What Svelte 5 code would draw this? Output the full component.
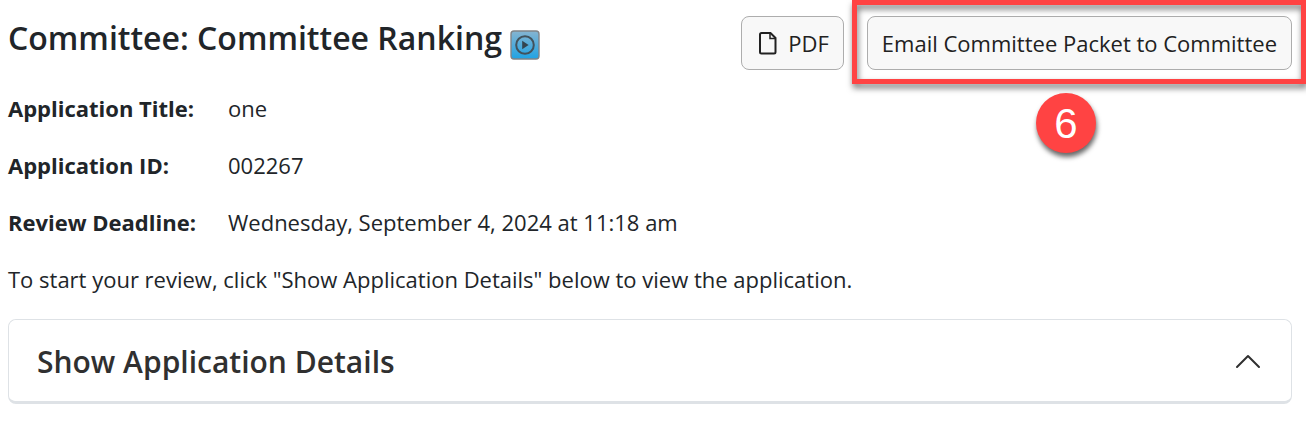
<script lang="ts">
	const title = 'Committee: Committee Ranking';

	const details = [
		{ label: 'Application Title:', value: 'one' },
		{ label: 'Application ID:', value: '002267' },
		{ label: 'Review Deadline:', value: 'Wednesday, September 4, 2024 at 11:18 am' }
	];

	let open = $state(true);
	const toggle = () => (open = !open);
</script>

<main class="page">
	<header class="top">
		<div class="heading">
			<h1>{title}</h1>
			<button class="video" type="button" aria-label="Play help video">
				<svg width="30" height="30" viewBox="0 0 30 30" aria-hidden="true">
					<defs>
						<linearGradient id="tile" x1="0" y1="0" x2="0" y2="1">
							<stop offset="0" stop-color="#86b4d0" />
							<stop offset="1" stop-color="#1fa3e4" />
						</linearGradient>
					</defs>
					<rect x="1" y="1" width="28" height="28" rx="3" fill="url(#tile)" stroke="#808488" stroke-width="1.4" />
					<circle cx="15" cy="15" r="8.8" fill="none" stroke="#42525c" stroke-width="2" />
					<path d="M12.200 10.800v8.400l6.400-4.200z" fill="#33444f" />
				</svg>
			</button>
		</div>

		<div class="actions">
			<button class="btn" type="button">
				<svg class="file" width="18" height="24" viewBox="0 0 18 24" aria-hidden="true">
					<path
						d="M3 2h8.500l5 5V21a1.500 1.500 0 0 1-1.500 1.500H2.500A1.500 1.500 0 0 1 1 21V3.500A1.500 1.500 0 0 1 2.500 2z"
						fill="none"
						stroke="#212121"
						stroke-width="2"
					/>
					<path d="M11 2v5.500h5.500" fill="none" stroke="#212121" stroke-width="1.500" />
				</svg>
				PDF
			</button>
			<div class="marked">
				<button class="btn" type="button">Email Committee Packet to Committee</button>
				<span class="frame"></span>
				<span class="step">6</span>
			</div>
		</div>
	</header>

	<dl class="details">
		{#each details as item}
			<div class="row">
				<dt>{item.label}</dt>
				<dd>{item.value}</dd>
			</div>
		{/each}
	</dl>

	<p class="hint">
		To start your review, click "Show Application Details" below to view the application.
	</p>

	<section class="accordion">
		<h2>
			<button class="toggle" type="button" aria-expanded={open} onclick={toggle}>
				Show Application Details
				<svg class="chevron" class:closed={!open} width="26" height="16" viewBox="0 0 26 16" aria-hidden="true">
					<path
						d="M2 13 13 2l11 11"
						fill="none"
						stroke="#303030"
						stroke-width="2"
						stroke-linecap="round"
						stroke-linejoin="round"
					/>
				</svg>
			</button>
		</h2>
	</section>
</main>

<style>
	:global(body) {
		margin: 0;
		background: #fff;
	}

	.page {
		padding: 16px 14px 24px 8px;
		font-family: 'Segoe UI', 'Open Sans', 'Noto Sans', sans-serif;
		font-size: 22px;
		line-height: 33px;
		color: #212529;
		overflow: hidden;
	}

	button {
		font: inherit;
		color: inherit;
		cursor: pointer;
	}

	/* Title and actions */
	.top {
		display: flex;
		justify-content: space-between;
		align-items: flex-start;
	}
	.heading {
		display: flex;
		align-items: flex-end;
		gap: 8px;
	}
	h1 {
		margin: 0;
		font-size: 32px;
		font-weight: 600;
		line-height: 44px;
	}
	.video {
		display: flex;
		padding: 0;
		border: 0;
		background: none;
	}
	.actions {
		display: flex;
		gap: 23px;
	}
	.btn {
		display: flex;
		align-items: center;
		gap: 8px;
		box-sizing: border-box;
		height: 54px;
		padding: 0 14px;
		border: 1px solid #adadad;
		border-radius: 8px;
		background: #f8f8f8;
		color: #212121;
		white-space: nowrap;
	}
	.file {
		margin: 0 3px;
	}

	/* Callout drawn over the email button */
	.marked {
		position: relative;
	}
	.frame {
		position: absolute;
		inset: -16px -14px -14px -15px;
		border: 5px solid #ff4343;
		filter: drop-shadow(1px 4px 3px rgba(0, 0, 0, 0.55));
		pointer-events: none;
	}
	.step {
		position: absolute;
		top: 77px;
		left: 169px;
		width: 60px;
		height: 60px;
		border-radius: 50%;
		background: #ff4343;
		box-shadow: 1px 4px 5px rgba(0, 0, 0, 0.6);
		color: #fff;
		font-family: Arial, 'Liberation Sans', sans-serif;
		font-size: 42px;
		line-height: 62px;
		text-align: center;
	}

	/* Application facts */
	.details {
		margin: 22px 0 0;
	}
	.row {
		display: flex;
		margin-bottom: 24px;
	}
	dt {
		width: 220px;
		font-weight: 700;
	}
	dd {
		margin: 0;
	}
	.hint {
		margin: 0 0 23px;
	}

	/* Accordion */
	.accordion {
		border: 1px solid #dee2e6;
		border-bottom-width: 3px;
		border-radius: 8px;
	}
	h2 {
		margin: 0;
		font-size: 30px;
		font-weight: 600;
		line-height: 40px;
	}
	.toggle {
		display: flex;
		justify-content: space-between;
		align-items: center;
		width: 100%;
		padding: 22px 30px 19px 28px;
		border: 0;
		border-radius: 8px;
		background: #fff;
		color: #303030;
		text-align: left;
	}
	.chevron.closed {
		transform: rotate(180deg);
	}
</style>
